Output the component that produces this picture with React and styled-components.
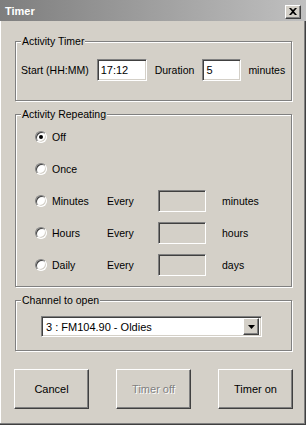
import React from 'react';
import styled, { createGlobalStyle } from 'styled-components';

const GlobalStyle = createGlobalStyle`
  html, body {
    margin: 0;
    padding: 0;
    background: #d4d0c8;
  }
  * {
    box-sizing: border-box;
  }
`;

const sunken = `
  border: 1px solid;
  border-color: #808080 #ffffff #ffffff #808080;
  box-shadow: inset 1px 1px 0 #404040, inset -1px -1px 0 #d4d0c8;
`;

const raised = `
  border: 1px solid;
  border-color: #ffffff #404040 #404040 #ffffff;
  box-shadow: inset -1px -1px 0 #808080;
`;

const Window = styled.div`
  width: 306px;
  height: 425px;
  display: flex;
  flex-direction: column;
  background: #d4d0c8;
  font-family: "Liberation Sans", Arial, sans-serif;
  font-size: 10.5px;
  color: #000;
  box-shadow: inset -1px -1px 0 #404040, inset -2px -2px 0 #808080, inset 1px 0 0 #ffffff;
`;

const TitleBar = styled.div`
  height: 21px;
  display: flex;
  align-items: center;
  justify-content: space-between;
  padding: 0 5px 0 5px;
  background: linear-gradient(to right, #7e7e7e, #c0c0c0);
`;

const Title = styled.span`
  color: #ffffff;
  font-weight: bold;
  font-size: 11px;
`;

const CloseButton = styled.div`
  width: 16px;
  height: 14px;
  ${raised};
  background: #d4d0c8;
  display: flex;
  align-items: center;
  justify-content: center;
  margin-top: 2px;
`;

const Body = styled.div`
  flex: 1;
  display: flex;
  flex-direction: column;
  padding: 14px 14px 0 15px;
`;

const Group = styled.fieldset`
  margin: 0 0 ${p => p.$gap || 0}px 0;
  min-width: 0;
  padding: ${p => p.$pad};
  border: 1px solid #808080;
  box-shadow: 1px 1px 0 #ffffff, inset 1px 1px 0 #ffffff;
`;

const Legend = styled.legend`
  padding: 0 1px;
  line-height: 13px;
  background: #d4d0c8;
`;

const TimerRow = styled.div`
  display: flex;
  align-items: center;
  height: 22px;
`;

const Label = styled.span`
  margin-left: ${p => p.$ml || 0}px;
  margin-right: ${p => p.$mr || 0}px;
  white-space: nowrap;
`;

const TextBox = styled.div`
  width: ${p => p.$w}px;
  height: 22px;
  ${sunken};
  background: ${p => (p.$disabled ? '#d4d0c8' : '#ffffff')};
  padding: 3px 0 0 3px;
  line-height: 14px;
  font-size: 11px;
`;

const RepeatGrid = styled.div`
  display: grid;
  grid-template-columns: 72px 51px 64px auto;
  grid-auto-rows: 32px;
  align-items: center;
  padding-left: 14px;
`;

const RadioLabel = styled.label`
  display: flex;
  align-items: center;
  gap: 5px;
`;

const Radio = styled.span`
  width: 12px;
  height: 12px;
  border-radius: 50%;
  border: 1px solid;
  border-color: #808080 #ffffff #ffffff #808080;
  box-shadow: inset 1px 1px 0 #404040, inset -1px -1px 0 #d4d0c8;
  background: #ffffff;
  display: flex;
  align-items: center;
  justify-content: center;
  &::after {
    content: '';
    width: 4px;
    height: 4px;
    border-radius: 50%;
    background: ${p => (p.$checked ? '#000' : 'transparent')};
  }
`;

const Combo = styled.div`
  margin-left: 20px;
  width: 221px;
  height: 21px;
  ${sunken};
  background: #ffffff;
  display: flex;
  align-items: center;
  justify-content: space-between;
  padding: 2px;
`;

const ComboText = styled.span`
  padding-left: 2px;
  font-size: 11px;
`;

const ComboButton = styled.div`
  width: 16px;
  height: 17px;
  ${raised};
  background: #d4d0c8;
  display: flex;
  align-items: center;
  justify-content: center;
`;

const ButtonRow = styled.div`
  display: flex;
  justify-content: space-between;
  margin: 0 -1px 0 -1px;
`;

const Button = styled.div`
  width: 75px;
  height: 40px;
  border: 1px solid;
  border-color: #ffffff #404040 #404040 #ffffff;
  box-shadow: inset -1px -1px 0 #808080;
  background: #d4d0c8;
  display: flex;
  align-items: center;
  justify-content: center;
  font-size: 11px;
  color: ${p => (p.$disabled ? '#808080' : '#000')};
  text-shadow: ${p => (p.$disabled ? '1px 1px 0 #ffffff' : 'none')};
`;

const repeats = [
  { name: 'Off', checked: true },
  { name: 'Once' },
  { name: 'Minutes', unit: 'minutes' },
  { name: 'Hours', unit: 'hours' },
  { name: 'Daily', unit: 'days' },
];

export default function App() {
  return (
    <>
      <GlobalStyle />
      <Window>
        <TitleBar>
          <Title>Timer</Title>
          <CloseButton>
            <svg width="8" height="7" viewBox="0 0 8 7">
              <path d="M0 0h2l2 2 2-2h2L5 3.5 8 7H6L4 5 2 7H0l3-3.5z" fill="#000" />
            </svg>
          </CloseButton>
        </TitleBar>

        <Body>
          <Group $pad="11px 5px 19px 5px" $gap={7}>
            <Legend>Activity Timer</Legend>
            <TimerRow>
              <Label $mr={8}>Start (HH:MM)</Label>
              <TextBox $w={50}>17:12</TextBox>
              <Label $ml={8} $mr={8}>Duration</Label>
              <TextBox $w={39}>5</TextBox>
              <Label $ml={7}>minutes</Label>
            </TimerRow>
          </Group>

          <Group $pad="0 5px 5px 5px" $gap={7}>
            <Legend>Activity Repeating</Legend>
            <RepeatGrid>
              {repeats.map(r => (
                <React.Fragment key={r.name}>
                  <RadioLabel>
                    <Radio $checked={r.checked} />
                    {r.name}
                  </RadioLabel>
                  <span>{r.unit ? 'Every' : ''}</span>
                  <span>{r.unit ? <TextBox $w={48} $disabled /> : null}</span>
                  <span>{r.unit || ''}</span>
                </React.Fragment>
              ))}
            </RepeatGrid>
          </Group>

          <Group $pad="9px 5px 13px 5px" $gap={18}>
            <Legend>Channel to open</Legend>
            <Combo>
              <ComboText>3 : FM104.90 - Oldies</ComboText>
              <ComboButton>
                <svg width="7" height="4" viewBox="0 0 7 4">
                  <path d="M0 0h7L3.5 4z" fill="#000" />
                </svg>
              </ComboButton>
            </Combo>
          </Group>

          <ButtonRow>
            <Button>Cancel</Button>
            <Button $disabled>Timer off</Button>
            <Button>Timer on</Button>
          </ButtonRow>
        </Body>
      </Window>
    </>
  );
}
